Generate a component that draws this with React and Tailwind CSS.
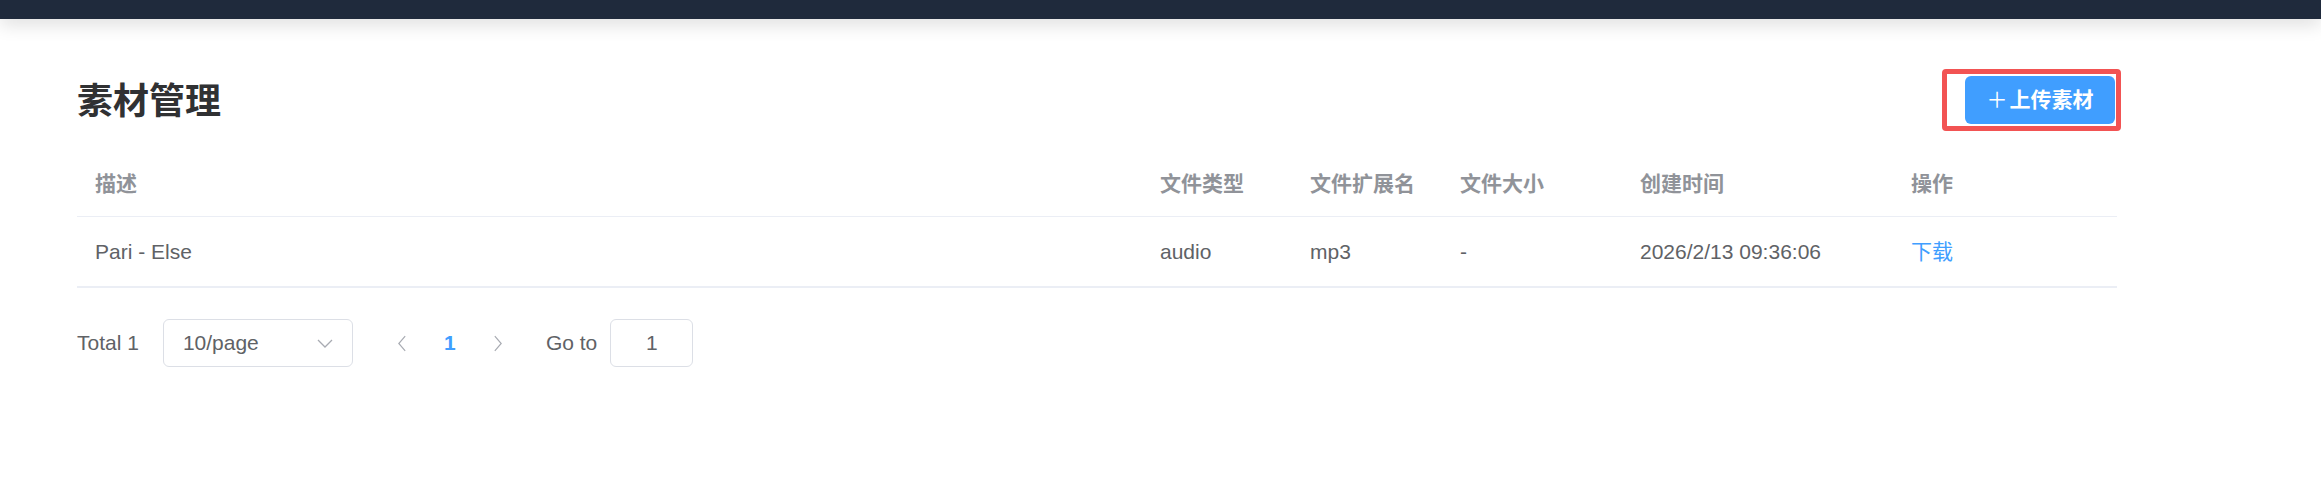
import React from "react";

const font = { fontFamily: '"Liberation Sans", "Noto Sans CJK SC", Arial, sans-serif' };

const cols = [
  { key: "desc", label: "描述", w: "w-[1065px]" },
  { key: "type", label: "文件类型", w: "w-[150px]" },
  { key: "ext", label: "文件扩展名", w: "w-[150px]" },
  { key: "size", label: "文件大小", w: "w-[180px]" },
  { key: "time", label: "创建时间", w: "w-[271px]" },
  { key: "op", label: "操作", w: "w-[224px]" },
];

const row = {
  desc: "Pari - Else",
  type: "audio",
  ext: "mp3",
  size: "-",
  time: "2026/2/13 09:36:06",
};

function Chevron({ dir }) {
  const d = dir === "left" ? "M9 1 L2 9 L9 17" : dir === "right" ? "M2 1 L9 9 L2 17" : "M1 1 L8 8 L15 1";
  const vb = dir === "down" ? "0 0 16 9" : "0 0 11 18";
  return (
    <svg viewBox={vb} className={dir === "down" ? "w-[16px] h-[9px]" : "w-[10px] h-[17px]"} fill="none" stroke="#a8abb2" strokeWidth="1.3">
      <path d={d} />
    </svg>
  );
}

export default function App() {
  return (
    <div className="min-h-[480px] bg-white text-[#606266]" style={font}>
      <div className="h-[19px] bg-[#1f2a3c] shadow-[0_6px_18px_rgba(0,0,0,0.13)]" />
      <div className="pl-[77px] pt-[50px]">
        <div className="w-[2044px]">
          <div className="flex items-center justify-between h-[62px]">
            <h1 className="text-[36px] font-bold text-[#303133] leading-none pt-[4px]">素材管理</h1>
            <div className="border-[5px] border-[#f25353] rounded-[4px] h-[62px] w-[179px] flex items-center justify-end pr-[1px]">
              <button className="h-[48px] w-[150px] rounded-[6px] bg-[#409eff] text-white text-[21px] font-bold flex items-center justify-center">
                <span className="font-normal mr-[2px]">＋</span>上传素材
              </button>
            </div>
          </div>

          <div className="w-[2040px] mt-[21px]">
            <div className="flex h-[65px] border-b border-[#ebeef5] items-center">
              {cols.map((c) => (
                <div key={c.key} className={`${c.w} pl-[18px] text-[21px] font-bold text-[#909399]`}>
                  {c.label}
                </div>
              ))}
            </div>
            <div className="flex h-[71px] border-b-2 border-[#ebeef5] items-center">
              {cols.map((c) => (
                <div key={c.key} className={`${c.w} pl-[18px] text-[21px]`}>
                  {c.key === "op" ? (
                    <span className="text-[#409eff]">下载</span>
                  ) : (
                    <span className="text-[#606266]">{row[c.key]}</span>
                  )}
                </div>
              ))}
            </div>
          </div>

          <div className="flex items-center h-[48px] mt-[31px] text-[21px] text-[#606266]">
            <span>Total 1</span>
            <div className="ml-[24px] w-[190px] h-[48px] rounded-[6px] border border-[#dcdfe6] flex items-center justify-between pl-[19px] pr-[19px]">
              <span>10/page</span>
              <Chevron dir="down" />
            </div>
            <div className="ml-[25px] w-[48px] h-[48px] flex items-center justify-center">
              <Chevron dir="left" />
            </div>
            <div className="w-[48px] h-[48px] flex items-center justify-center text-[#409eff] font-bold">1</div>
            <div className="w-[48px] h-[48px] flex items-center justify-center">
              <Chevron dir="right" />
            </div>
            <span className="ml-[24px]">Go to</span>
            <div className="ml-[13px] w-[83px] h-[48px] rounded-[6px] border border-[#dcdfe6] flex items-center justify-center">
              1
            </div>
          </div>
        </div>
      </div>
    </div>
  );
}
